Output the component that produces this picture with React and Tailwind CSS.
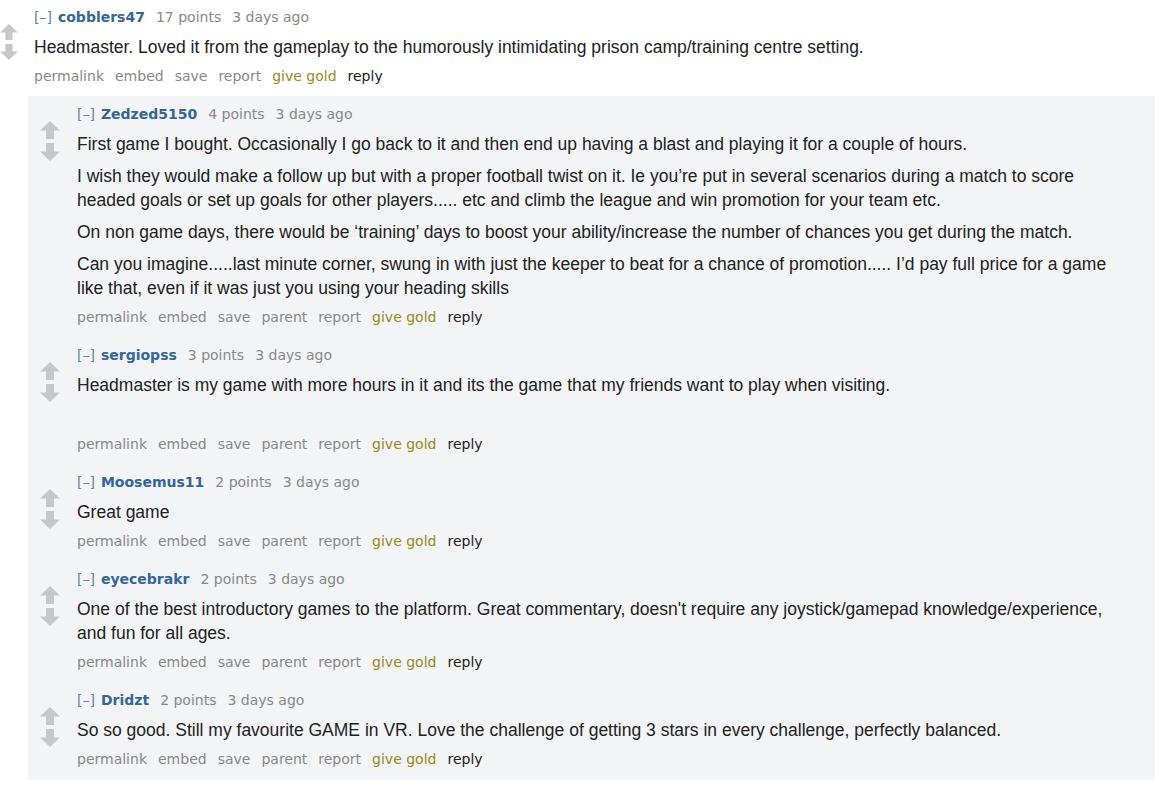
import React from 'react';

const meta = "font-['DejaVu_Sans',Verdana,sans-serif]";
const body = "font-['Liberation_Sans',Arial,sans-serif]";

const Arrow = ({ down = false, size = 20 }) => (
  <svg width={size} height={size - 2} viewBox="0 0 20 18">
    {down ? (
      <path d="M10 18 L20 8.5 L14 8.5 L14 0 L6 0 L6 8.5 L0 8.5 Z" fill="#c6c7ca" />
    ) : (
      <path d="M10 0 L20 9.5 L14 9.5 L14 18 L6 18 L6 9.5 L0 9.5 Z" fill="#c6c7ca" />
    )}
  </svg>
);

const Arrows = ({ size = 20 }) => (
  <div className="flex flex-col items-center gap-[4px] pt-[17px] shrink-0" style={{ width: size }}>
    <Arrow size={size} />
    <Arrow down size={size} />
  </div>
);

const Tagline = ({ user, points }) => (
  <div className={`${meta} text-[14px] leading-[20px] flex items-baseline`}>
    <span className="text-[#6282b0]">[–]</span>
    <span className="ml-[6px] font-bold text-[#336699]">{user}</span>
    <span className="ml-[11px] text-[#888]">{points}</span>
    <span className="ml-[11px] text-[#888]">3 days ago</span>
  </div>
);

const Buttons = ({ parent = true }) => {
  const items = ['permalink', 'embed', 'save'];
  if (parent) items.push('parent');
  items.push('report');
  return (
    <div className={`${meta} text-[14px] leading-[20px] flex gap-[11px] text-[#888]`}>
      {items.map(i => <span key={i}>{i}</span>)}
      <span className="text-[#9a8a1a]">give gold</span>
      <span className="text-[#222]">reply</span>
    </div>
  );
};

const Body = ({ paras }) => (
  <div className={`${body} text-[17.5px] leading-[24px] text-[#222] mt-[8px] whitespace-nowrap`}>
    {paras.map((p, i) => (
      <div key={i} className={i > 0 ? 'mt-[8px]' : ''}>
        {p.map((line, j) => <div key={j}>{line}</div>)}
      </div>
    ))}
  </div>
);

const Comment = ({ user, points, paras, parent = true, extra = false }) => (
  <div className="flex">
    <Arrows />
    <div className="ml-[17px] flex-1">
      <Tagline user={user} points={points} />
      <Body paras={paras} />
      {extra && <div className="h-[30px]" />}
      <div className="mt-[7px]">
        <Buttons parent={parent} />
      </div>
    </div>
  </div>
);

const replies = [
  {
    user: 'Zedzed5150',
    points: '4 points',
    paras: [
      ['First game I bought. Occasionally I go back to it and then end up having a blast and playing it for a couple of hours.'],
      [
        'I wish they would make a follow up but with a proper football twist on it. Ie you’re put in several scenarios during a match to score',
        'headed goals or set up goals for other players..... etc and climb the league and win promotion for your team etc.',
      ],
      ['On non game days, there would be ‘training’ days to boost your ability/increase the number of chances you get during the match.'],
      [
        'Can you imagine.....last minute corner, swung in with just the keeper to beat for a chance of promotion..... I’d pay full price for a game',
        'like that, even if it was just you using your heading skills',
      ],
    ],
  },
  {
    user: 'sergiopss',
    points: '3 points',
    extra: true,
    paras: [['Headmaster is my game with more hours in it and its the game that my friends want to play when visiting.']],
  },
  { user: 'Moosemus11', points: '2 points', paras: [['Great game']] },
  {
    user: 'eyecebrakr',
    points: '2 points',
    paras: [[
      "One of the best introductory games to the platform. Great commentary, doesn't require any joystick/gamepad knowledge/experience,",
      'and fun for all ages.',
    ]],
  },
  {
    user: 'Dridzt',
    points: '2 points',
    paras: [['So so good. Still my favourite GAME in VR. Love the challenge of getting 3 stars in every challenge, perfectly balanced.']],
  },
];

export default function App() {
  return (
    <div className="bg-white w-[1155px] h-[787px] overflow-hidden pt-[7px]">
      <div className="flex">
        <Arrows size={18} />
        <div className="ml-[16px] flex-1">
          <Tagline user="cobblers47" points="17 points" />
          <Body paras={[['Headmaster. Loved it from the gameplay to the humorously intimidating prison camp/training centre setting.']]} />
          <div className="mt-[7px]">
            <Buttons parent={false} />
          </div>
        </div>
      </div>
      <div className="ml-[28px] mt-[10px] bg-[#f3f4f6] pl-[12px] pt-[8px] pb-[11px] flex flex-col gap-[18px]">
        {replies.map(r => (
          <Comment key={r.user} {...r} />
        ))}
      </div>
    </div>
  );
}
